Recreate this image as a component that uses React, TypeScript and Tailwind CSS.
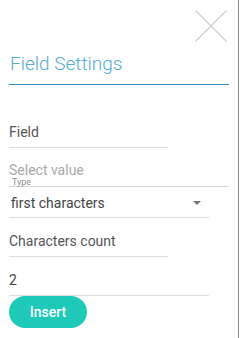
/**
 * FieldSettings — side panel for configuring a field insert.
 */

const font = { fontFamily: 'Roboto, "Liberation Sans", sans-serif' }

function CloseIcon() {
  return (
    <svg
      xmlns="http://www.w3.org/2000/svg"
      viewBox="0 0 32 32"
      className="w-[32px] h-[32px]"
      fill="none"
      stroke="#cfcfcf"
      strokeWidth={1.2}
      aria-hidden="true"
    >
      <path d="M0.5 0.5L31.5 31.5" />
      <path d="M31.5 0.5L0.5 31.5" />
    </svg>
  )
}

export default function App() {
  return (
    <div className="w-[240px] h-[338px] bg-white flex" style={font}>
      <div className="w-[239px] h-full border-r border-[#8a8a8a] pl-[9px] flex flex-col">
        {/* Header */}
        <div className="flex justify-end pt-[10px] pr-[11px]">
          <CloseIcon />
        </div>
        <div className="w-[220px] mt-[10px] pb-[8px] border-b border-[#2b93c2]">
          <h1 className="text-[19px] leading-[24px] font-light text-[#55acd3] pl-px">
            Field Settings
          </h1>
        </div>

        {/* Field */}
        <div className="w-[159px] mt-[39px] pb-[7px] border-b border-[#dcdcdc]">
          <div className="text-[14px] leading-[16px] text-[#555]">Field</div>
        </div>

        {/* Select value + Type */}
        <div className="w-[220px] mt-[14px] border-b border-[#d6d6d6]">
          <div className="text-[14px] leading-[16px] text-[#a9a9a9]">Select value</div>
          <div className="text-[9px] leading-[8px] text-[#8f8f8f] pl-[3px]">Type</div>
        </div>

        {/* Type select */}
        <div className="w-[200px] mt-[8px] pb-[6px] border-b border-[#dcdcdc] flex items-center justify-between">
          <span className="text-[14px] leading-[16px] text-[#444] pl-[2px]">first characters</span>
          <svg viewBox="0 0 8 4" className="w-[8px] h-[4px] mr-[8px]" aria-hidden="true">
            <path d="M0 0H8L4 4Z" fill="#757575" />
          </svg>
        </div>

        {/* Characters count */}
        <div className="w-[159px] mt-[15px] pb-[7px] border-b border-[#dcdcdc]">
          <div className="text-[14px] leading-[16px] text-[#555]">Characters count</div>
        </div>

        {/* Count value */}
        <div className="w-[200px] mt-[15px] pb-[7px] border-b border-[#dcdcdc]">
          <div className="text-[14px] leading-[16px] text-[#444]">2</div>
        </div>

        <button
          type="button"
          className="w-[78px] h-[32px] rounded-full bg-[#1ecab7] text-white text-[14px] font-medium leading-[16px]"
        >
          Insert
        </button>
      </div>
    </div>
  )
}
